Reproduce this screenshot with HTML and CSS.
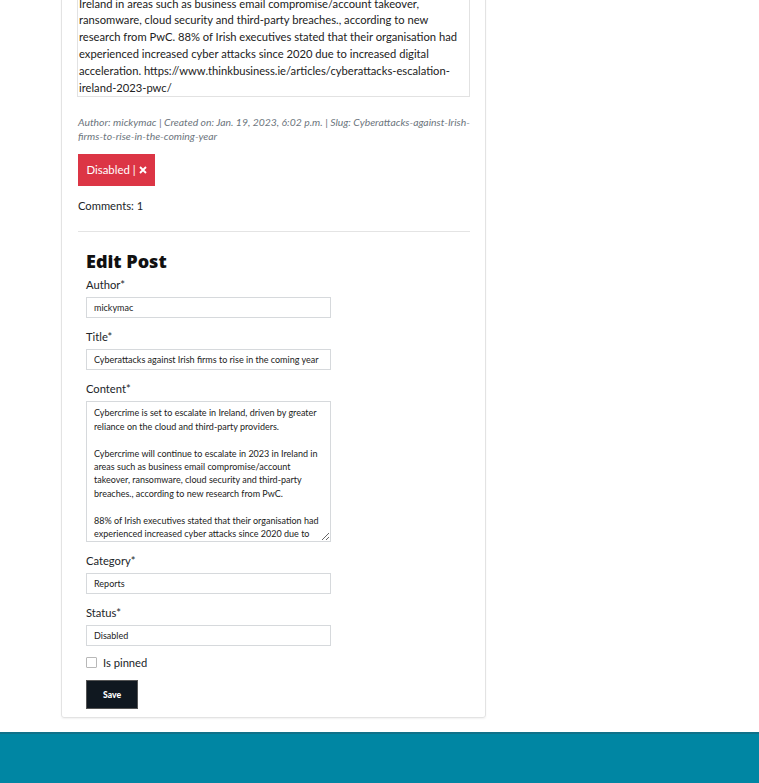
FILE: index.html
```html
<!DOCTYPE html>
<html lang="en">
<head>
<meta charset="utf-8">
<title>Post detail</title>
<link rel="stylesheet" href="styles.css">
</head>
<body>
<main class="page">
  <div class="col">
    <article class="card">
      <div class="post-body">Cybercrime is set to escalate in Ireland, driven by greater reliance on the cloud<br>and third-party providers. Cybercrime will continue to escalate in 2023 in<br>Ireland in areas such as business email compromise/account takeover,<br>ransomware, cloud security and third-party breaches., according to new<br>research from PwC. 88% of Irish executives stated that their organisation had<br>experienced increased cyber attacks since 2020 due to increased digital<br>acceleration. https://www.thinkbusiness.ie/articles/cyberattacks-escalation-<br>ireland-2023-pwc/</div>
      <p class="meta">Author: mickymac | Created on: Jan. 19, 2023, 6:02 p.m. | Slug: Cyberattacks-against-Irish-<br>firms-to-rise-in-the-coming-year</p>
      <button class="btn-status" type="button">Disabled |<svg class="x" viewBox="0 0 8 8" width="8" height="8" aria-hidden="true"><path d="M1 1L7 7M7 1L1 7" stroke="#fff" stroke-width="1.9" stroke-linecap="butt" fill="none"/></svg></button>
      <p class="comments">Comments: 1</p>
      <hr class="divider">
      <form class="edit-form">
        <h2 class="form-title">Edit Post</h2>
        <div class="field">
          <label class="label" for="author">Author*</label>
          <input class="input" id="author" type="text" value="mickymac">
        </div>
        <div class="field">
          <label class="label" for="title">Title*</label>
          <input class="input" id="title" type="text" value="Cyberattacks against Irish firms to rise in the coming year">
        </div>
        <div class="field">
          <label class="label" for="content">Content*</label>
          <textarea class="input textarea" id="content">Cybercrime is set to escalate in Ireland, driven by greater reliance on the cloud and third-party providers.

Cybercrime will continue to escalate in 2023 in Ireland in areas such as business email compromise/account takeover, ransomware, cloud security and third-party breaches., according to new research from PwC.

88% of Irish executives stated that their organisation had experienced increased cyber attacks since 2020 due to increased digital acceleration.</textarea>
        </div>
        <div class="field">
          <label class="label" for="category">Category*</label>
          <input class="input" id="category" type="text" value="Reports">
        </div>
        <div class="field">
          <label class="label" for="status">Status*</label>
          <input class="input" id="status" type="text" value="Disabled">
        </div>
        <div class="check">
          <input class="checkbox" id="pinned" type="checkbox">
          <label class="check-label" for="pinned">Is pinned</label>
        </div>
        <button class="btn-save" type="button">Save</button>
      </form>
    </article>
  </div>
</main>
<footer class="footer"></footer>
</body>
</html>
```
FILE: styles.css
```css
* { box-sizing: border-box; }
html, body { margin: 0; padding: 0; background: #fff; }
body {
  font-family: Lato, "Open Sans", sans-serif;
  color: #212529;
  overflow: hidden;
}
.page {
  margin-top: -39px;
  padding-left: 61px;
}
.col { width: 425px; }
.card {
  border: 1px solid #e3e3e3;
  border-radius: 3px;
  box-shadow: 0 1px 2px rgba(0,0,0,0.06);
  padding: 0 15px 8px 15px;
}
.post-body {
  border: 1px solid #e2e2e2;
  border-top: none;
  padding: 0 2px 0 1px;
  font-size: 11.2px;
  line-height: 16.8px;
  white-space: nowrap;
  color: #222;
}
.meta {
  margin: 18px 0 11px 1px;
  font-size: 10.4px;
  line-height: 14px;
  font-style: italic;
  color: #6c757d;
  white-space: nowrap;
}
.btn-status {
  display: flex;
  align-items: center;
  justify-content: center;
  gap: 3px;
  margin-left: 1px;
  height: 32px;
  width: 77px;
  padding: 0 0 1px 0;
  border: none;
  background: #dc3545;
  color: #fff;
  font-family: inherit;
  font-size: 11.4px;
}
.btn-status .x { display: block; }
.comments {
  margin: 12px 0 17px 1px;
  font-size: 11.2px;
  line-height: 16px;
}
.divider {
  margin: 0 0 0 1px;
  border: none;
  border-top: 1px solid #e4e4e4;
}
.edit-form { padding: 0 0 0 9px; }
.form-title {
  margin: 17px 0 4px 0;
  font-family: "Open Sans", sans-serif;
  font-size: 18px;
  line-height: 24px;
  font-weight: 800;
  color: #111;
}
.field { margin-bottom: 11px; }
.label {
  display: block;
  font-size: 11.2px;
  line-height: 16px;
  margin-bottom: 4px;
}
.input {
  display: block;
  width: 245px;
  height: 21px;
  border: 1px solid #d6d9dc;
  padding: 0 7px;
  font-family: inherit;
  font-size: 9px;
  color: #222;
  background: #fff;
}
.textarea {
  height: 141px;
  padding: 4px 7px;
  line-height: 13.4px;
  resize: vertical;
  overflow: hidden;
}
.check {
  display: flex;
  align-items: center;
  gap: 6px;
  margin-top: 1px;
  height: 11px;
}
.checkbox {
  margin: 0;
  width: 11px;
  height: 11px;
  appearance: none;
  border: 1px solid #b8b8b8;
  border-radius: 1px;
  background: #fff;
}
.check-label { font-size: 11.2px; }
.btn-save {
  display: block;
  margin-top: 12px;
  width: 52px;
  height: 29px;
  padding: 0;
  border: 1px solid #555;
  background: #101820;
  color: #fff;
  font-family: inherit;
  font-weight: 900;
  font-size: 8.6px;
}
.footer {
  margin-top: 14px;
  height: 60px;
  background: #0086a3;
  border-top: 2px solid #107189;
}
```
